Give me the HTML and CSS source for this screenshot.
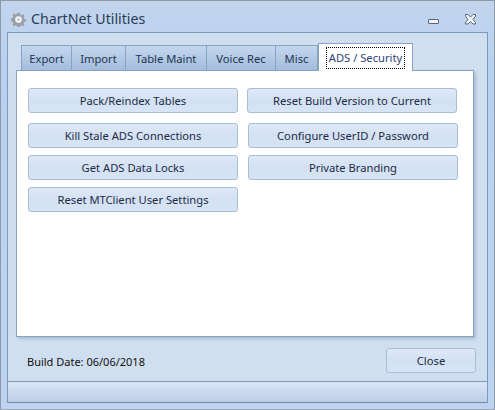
FILE: index.html
```html
<!DOCTYPE html>
<html>
<head>
<meta charset="UTF-8">
<title>ChartNet Utilities</title>
<link rel="stylesheet" href="styles.css">
</head>
<body>
<div class="window">
	<div class="titlebar">
		<svg class="gear" width="15" height="15" viewBox="0 0 16 16">
			<path d="M6.8 0.8h2.4l.4 2 1.5.6 1.7-1.1 1.7 1.7-1.1 1.7.6 1.5 2 .4v2.4l-2 .4-.6 1.5 1.1 1.7-1.7 1.7-1.7-1.1-1.5.6-.4 2H6.8l-.4-2-1.5-.6-1.7 1.1-1.7-1.7 1.1-1.7-.6-1.5-2-.4V6.8l2-.4.6-1.5-1.1-1.7 1.7-1.7 1.7 1.1 1.5-.6z" fill="#9a9ea6"/>
			<circle cx="8" cy="8" r="3.6" fill="#f4f5f6"/>
			<circle cx="8" cy="8" r="1.6" fill="#c3c7cd"/>
		</svg>
		<div class="title">ChartNet Utilities</div>
		<div class="win-min"></div>
		<svg class="win-close" width="13" height="11" viewBox="0 0 13 11">
			<path d="M1.5 .5h2.5l2.5 2.5 2.5-2.5h2.5v1.5l-2.5 3.5 2.5 3v1.500h-2.500l-2.500-2.500-2.500 2.500h-2.500v-1.500l2.500-3-2.500-3.500z" fill="#f2f5f9" stroke="#5c6675" stroke-width="1"/>
		</svg>
	</div>
	<div class="panel">
		<div class="body">
			<ul class="tabs">
				<li class="tab t-export">Export</li>
				<li class="tab t-import">Import</li>
				<li class="tab t-table">Table Maint</li>
				<li class="tab t-voice">Voice Rec</li>
				<li class="tab t-misc">Misc</li>
				<li class="tab active"><span class="focus">ADS / Security</span></li>
			</ul>
			<div class="page">
				<div class="col">
					<button class="btn first">Pack/Reindex Tables</button>
					<button class="btn second">Kill Stale ADS Connections</button>
					<button class="btn">Get ADS Data Locks</button>
					<button class="btn">Reset MTClient User Settings</button>
				</div>
				<div class="col right">
					<button class="btn first shift">Reset Build Version to Current</button>
					<button class="btn second">Configure UserID / Password</button>
					<button class="btn">Private Branding</button>
				</div>
			</div>
			<div class="foot">
				<div class="build">Build Date: 06/06/2018</div>
				<button class="btn close">Close</button>
			</div>
		</div>
		<div class="status"></div>
	</div>
</div>
</body>
</html>
```

FILE: styles.css
```css
body, div, ul, li {
	margin: 0;
	padding: 0;
}

body {
	width: 495px;
	height: 410px;
	overflow: hidden;
	font-family: "Noto Sans", "Open Sans", sans-serif;
	font-size: 11.2px;
	color: #1e2b45;
}

.window {
	box-sizing: border-box;
	width: 495px;
	height: 410px;
	display: flex;
	flex-direction: column;
	border: 1px solid #8d9aa8;
	border-bottom-color: #a0a8b2;
	background: linear-gradient(to bottom, #c2d5ed, #b9d1f0 60px, #bdd3f1);
}

.titlebar {
	height: 31px;
	flex: none;
	display: flex;
	align-items: center;
	padding: 0 17px 0 10px;
}

.gear {
	margin-top: 5px;
}

.title {
	flex: 1;
	margin-left: 5px;
	margin-top: 4px;
	font-size: 14.2px;
	color: #2a3c58;
}

.win-min {
	width: 9px;
	height: 3px;
	margin: 10px 25px 0 0;
	background: #f2f5f9;
	border: 1px solid #5c6675;
	border-radius: 1px;
}

.win-close {
	margin-top: 6px;
}

/* inner area */
.panel {
	flex: 1;
	display: flex;
	flex-direction: column;
	margin: 0 6px 6px 6px;
	border: 1px solid #7d9ab9;
	border-bottom-color: #6f8cab;
	background: #cfdfef;
}

.body {
	flex: 1;
	padding: 11px 13px 0 8px;
}

.tabs {
	display: flex;
	height: 26px;
	padding-left: 5px;
	list-style: none;
	align-items: flex-end;
}

.tab {
	box-sizing: border-box;
	height: 25px;
	line-height: 25px;
	text-align: center;
	background: linear-gradient(to bottom, #c3d7ee, #a3bcdc);
	border: 1px solid #88a3c0;
	border-bottom: none;
	border-left: none;
	color: #24344f;
}

.t-export { width: 51px; border-left: 1px solid #88a3c0; }
.t-import { width: 54px; }
.t-table { width: 81px; }
.t-voice { width: 69px; }
.t-misc { width: 42px; }

.tab.active {
	width: 95px;
	height: 28px;
	margin-bottom: -1px;
	padding: 2px 7px 0 7px;
	background: #fff;
	border: 1px solid #88a3c0;
	border-bottom: none;
	position: relative;
	z-index: 1;
}

.focus {
	display: block;
	box-sizing: border-box;
	height: 22px;
	line-height: 19px;
	border: 1px dotted #000;
	white-space: nowrap;
	margin-top: 1px;
	color: #2f3f7a;
}

.page {
	box-sizing: border-box;
	height: 267px;
	display: flex;
	gap: 10px;
	padding: 17px 0 0 11px;
	background: #fff;
	border: 1px solid #88a3c0;
	box-shadow: 2px 2px 3px #a9bcd2;
}

.col {
	display: flex;
	flex-direction: column;
	gap: 7px;
	width: 210px;
}

.btn {
	box-sizing: border-box;
	display: block;
	width: 210px;
	height: 25px;
	padding: 0;
	font-family: "Noto Sans", "Open Sans", sans-serif;
	font-size: 11.2px;
	color: #1e2b45;
	border: 1px solid #aabdd4;
	border-radius: 3px;
	background: linear-gradient(to bottom, #dfe9f7, #d3e1f3 50%, #d7e4f6);
}

.btn.first {
	margin-bottom: 3px;
}

.btn.shift {
	margin-left: -1px;
}

.foot {
	display: flex;
	justify-content: space-between;
	align-items: center;
	padding: 11px 0 0 11px;
}

.build {
	margin-top: 2px;
	color: #111;
	font-size: 11px;
}

.btn.close {
	width: 90px;
	margin-right: -2px;
}

.status {
	height: 20px;
	flex: none;
	border-top: 1px solid #7d9ab9;
	background: linear-gradient(to bottom, #dbe6f8, #bccde6);
}
```
